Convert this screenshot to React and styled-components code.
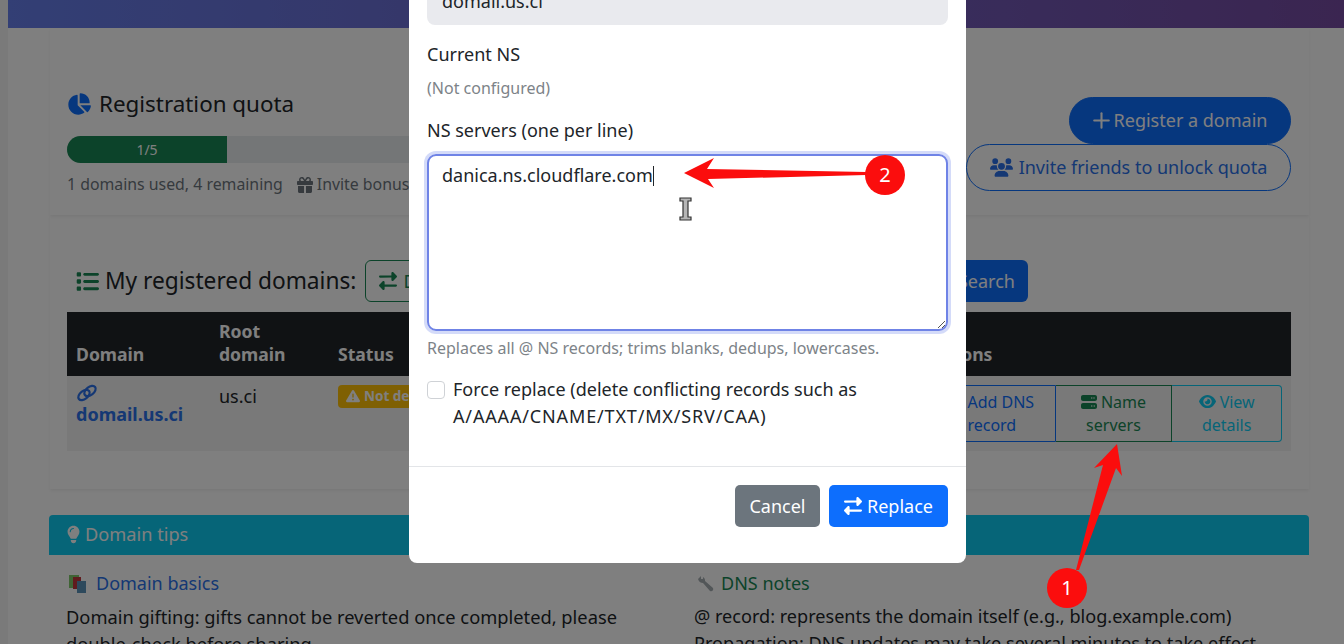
import React from 'react';
import styled, { createGlobalStyle } from 'styled-components';
import { Plus } from 'lucide-react';
import {
  FaChartPie, FaGift, FaUsers, FaList, FaRightLeft,
  FaTriangleExclamation, FaServer, FaEye, FaLightbulb, FaCirclePlus,
} from 'react-icons/fa6';

const GlobalStyle = createGlobalStyle`
  html, body { margin: 0; padding: 0; height: 644px; overflow: hidden; background: #f4f4f4; }
  body { font-family: "Noto Sans", "Open Sans", sans-serif; font-size: 18px; line-height: 27px; color: #212529; }
  * { box-sizing: border-box; }
`;

const Screen = styled.div`
  position: relative;
  height: 644px;
  overflow: hidden;
  padding-left: 8px;
`;

const Page = styled.div`
  background: #fff;
  height: 100%;
`;

const TopBar = styled.div`
  height: 28px;
  background: linear-gradient(90deg, #667eea, #764ba2);
`;

const Main = styled.main`
  padding: 0 35px 0 41px;
`;

const Card = styled.section`
  padding: 0 18px 0 17px;
  margin-left: 1px;
  box-shadow: 0 2px 3px rgba(0, 0, 0, 0.06);
`;

const QuotaCard = styled(Card)`
  height: 187px;
  display: flex;
  justify-content: space-between;
  padding-top: 61px;
`;

const QuotaLeft = styled.div`
  width: 800px;
`;

const CardTitle = styled.h2`
  margin: 0;
  font-size: 22.4px;
  line-height: 30px;
  font-weight: 400;
  display: flex;
  align-items: center;
  gap: 8px;
  svg { color: ${(p) => p.$icon}; flex: none; }
`;

const Progress = styled.div`
  height: 27px;
  margin-top: 17px;
  border-radius: 14px;
  background: #e9ecef;
  overflow: hidden;
`;

const ProgressFill = styled.div`
  height: 100%;
  background: #198754;
  color: #fff;
  font-size: 14px;
  text-align: center;
`;

const QuotaNote = styled.div`
  margin-top: 8px;
  color: #6c757d;
  font-size: 15.85px;
  display: flex;
  align-items: center;
  gap: 14px;
  span { display: inline-flex; align-items: center; gap: 4px; }
`;

const QuotaActions = styled.div`
  width: 325px;
  margin-top: 8px;
  display: flex;
  flex-direction: column;
  align-items: flex-end;
`;

const PillButton = styled.div`
  height: 47px;
  border-radius: 24px;
  display: inline-flex;
  align-items: center;
  justify-content: center;
  gap: ${(p) => p.$gap}px;
  width: ${(p) => p.$width}px;
  padding-right: ${(p) => (p.$outline ? 0 : 4)}px;
  color: ${(p) => (p.$outline ? '#2a70e8' : '#fff')};
  background: ${(p) => (p.$outline ? 'transparent' : '#0d6efd')};
  border: 1px solid #0d6efd;
`;

const DomainsCard = styled(Card)`
  height: 274px;
  padding-top: 45px;
`;

const TitleRow = styled.div`
  height: 42px;
  display: flex;
  align-items: center;
  padding-left: 9px;
`;

const TitleText = styled(CardTitle)`
  font-size: 22.7px;
  gap: 6px;
`;

const GiftButton = styled.div`
  margin-left: 9px;
  width: 150px;
  height: 42px;
  border: 1px solid #198754;
  border-radius: 6px;
  color: #198754;
  display: flex;
  align-items: center;
  padding-left: 13px;
  gap: 6px;
`;

const SearchButton = styled.div`
  margin-left: 429px;
  width: 84px;
  height: 42px;
  border-radius: 6px;
  background: #0d6efd;
  color: #fff;
  display: flex;
  align-items: center;
  justify-content: center;
`;

const Table = styled.table`
  width: 1224px;
  margin-top: 10px;
  border-collapse: collapse;
  table-layout: fixed;
`;

const HeadCell = styled.th`
  background: #212529;
  color: #fff;
  text-align: left;
  vertical-align: bottom;
  font-weight: 700;
  font-size: 17.6px;
  padding: 8px 9px 10px;
  line-height: 23px;
`;

const Cell = styled.td`
  background: #f2f2f2;
  vertical-align: top;
  padding: 7px 9px 9px;
  height: 75px;
`;

const DomainLink = styled.a`
  color: #2a70e8;
  font-weight: 700;
  display: block;
  line-height: 24px;
  margin-top: 1px;
  svg { display: block; }
`;

const Badge = styled.span`
  display: inline-flex;
  align-items: center;
  gap: 4px;
  height: 23px;
  padding: 0 8px;
  background: #ffc107;
  color: #fff;
  border-radius: 4px;
  font-size: 13.5px;
  font-weight: 700;
  white-space: nowrap;
`;

const ButtonGroup = styled.div`
  display: flex;
  margin: 2px 0 0 1px;
`;

const ActionButton = styled.div`
  width: ${(p) => p.$width}px;
  height: 57px;
  border: 1px solid ${(p) => p.$color};
  border-left-width: ${(p) => (p.$first ? 1 : 0)}px;
  color: ${(p) => p.$color};
  border-radius: ${(p) => (p.$first ? '4px 0 0 4px' : p.$last ? '0 4px 4px 0' : '0')};
  font-size: 16px;
  line-height: 23px;
  text-align: center;
  padding: 5px 8px 0;
  svg { vertical-align: -2px; margin-right: 4px; }
`;

const TipsCard = styled.section`
  margin-top: 26px;
  border-radius: 4px 4px 0 0;
`;

const TipsHeader = styled.div`
  height: 40px;
  background: #0dcaf0;
  color: #fff;
  border-radius: 4px 4px 0 0;
  padding: 0 0 2px 18px;
  display: flex;
  align-items: center;
  gap: 5px;
  font-size: 18.2px;
  svg { width: 13px; height: 19px; }
`;

const TipsBody = styled.div`
  display: grid;
  grid-template-columns: 628px 1fr;
  padding: 15px 18px 0 17px;
`;

const TipTitle = styled.div`
  display: flex;
  align-items: center;
  gap: ${(p) => p.$gap}px;
  height: 27px;
  color: ${(p) => p.$color};
  svg { margin-left: 3px; flex: none; }
`;

const TipText = styled.p`
  margin: 6px 0 0;
  font-size: ${(p) => p.$size}px;
  white-space: nowrap;
`;

const Backdrop = styled.div`
  position: absolute;
  inset: 0;
  background: rgba(0, 0, 0, 0.5);
`;

const Modal = styled.div`
  position: absolute;
  left: 409px;
  bottom: 81px;
  width: 557px;
  background: #fff;
  border-radius: 0 0 8px 8px;
`;

const ModalBody = styled.div`
  padding: 0 18px 36px;
`;

const ReadOnlyField = styled.div`
  height: 46px;
  background: #e9eaee;
  border-radius: 8px;
  padding: 9px 15px;
`;

const FieldLabel = styled.div`
  margin-top: ${(p) => p.$top}px;
`;

const Muted = styled.div`
  color: #7d8388;
  font-size: 16px;
  line-height: 24px;
  margin-top: ${(p) => p.$top}px;
`;

const NsInput = styled.div`
  position: relative;
  height: 177px;
  margin-top: 10px;
  border: 2px solid #6f83e6;
  border-radius: 9px;
  box-shadow: 0 0 0 3px rgba(102, 126, 234, 0.28);
  padding: 6px 13px;
`;

const Caret = styled.span`
  display: inline-block;
  width: 1px;
  height: 20px;
  background: #212529;
  vertical-align: -4px;
`;

const ResizeGrip = styled.svg`
  position: absolute;
  right: 0;
  bottom: 0;
`;

const CheckRow = styled.label`
  display: flex;
  gap: 8px;
  margin-top: 16px;
`;

const CheckBox = styled.span`
  flex: none;
  width: 18px;
  height: 18px;
  margin-top: 5px;
  border: 1px solid #cfd2d6;
  border-radius: 4px;
`;

const CodeList = styled.span`
  letter-spacing: 0.85px;
`;

const ModalFooter = styled.div`
  height: 97px;
  border-top: 1px solid #e3e5e8;
  padding: 18px 18px 0;
  display: flex;
  justify-content: flex-end;
  gap: 9px;
`;

const FooterButton = styled.div`
  width: ${(p) => p.$width}px;
  height: 42px;
  border-radius: 5px;
  color: #fff;
  background: ${(p) => p.$bg};
  display: flex;
  align-items: center;
  justify-content: center;
  gap: 5px;
`;

const Annotations = styled.svg`
  position: absolute;
  left: 0;
  top: 0;
  pointer-events: none;
`;

const Marker = styled.div`
  position: absolute;
  left: ${(p) => p.$x}px;
  top: ${(p) => p.$y}px;
  width: 40px;
  height: 40px;
  border-radius: 50%;
  background: #fb0d0d;
  color: #fff;
  font-size: 20px;
  line-height: 40px;
  text-align: center;
`;

function ChainIcon() {
  return (
    <svg width="22" height="18" viewBox="0 0 22 18" fill="none" stroke="currentColor" strokeWidth="2.2">
      <ellipse cx="8" cy="11" rx="6.500" ry="4" transform="rotate(-38 8 11)" />
      <ellipse cx="14" cy="7" rx="6.500" ry="4" transform="rotate(-38 14 7)" />
    </svg>
  );
}

function BooksIcon() {
  return (
    <svg width="18" height="18" viewBox="0 0 18 18">
      <rect x="0" y="0" width="10" height="13" fill="#7fc96b" />
      <rect x="4" y="2" width="8" height="12" fill="#c0373d" />
      <rect x="8" y="6" width="9" height="12" fill="#5b93b8" />
    </svg>
  );
}

function WrenchIcon() {
  return (
    <svg width="18" height="18" viewBox="0 0 18 18">
      <path d="M1 4L4 1L4 4L6 4L6 2C8 3 8 5 8 6L16 13C17 15 15 17 13 16L6 8C4 8 2 7 1 4Z" fill="#a4acb0" />
    </svg>
  );
}

export default function App() {
  return (
    <>
      <GlobalStyle />
      <Screen>
        <Page>
          <TopBar />
          <Main>
            <QuotaCard>
              <QuotaLeft>
                <CardTitle $icon="#0d6efd"><FaChartPie size={24} />Registration quota</CardTitle>
                <Progress><ProgressFill style={{ width: `${(1 / 5) * 100}%` }}>1/5</ProgressFill></Progress>
                <QuotaNote>
                  1 domains used, 4 remaining
                  <span><FaGift size={16} />Invite bonus</span>
                </QuotaNote>
              </QuotaLeft>
              <QuotaActions>
                <PillButton $width={222} $gap={0}><Plus size={25} strokeWidth={2} />Register a domain</PillButton>
                <PillButton $width={325} $gap={6} $outline><FaUsers size={23} />Invite friends to unlock quota</PillButton>
              </QuotaActions>
            </QuotaCard>

            <DomainsCard>
              <TitleRow>
                <TitleText $icon="#198754"><FaList size={23} />My registered domains:</TitleText>
                <GiftButton><FaRightLeft size={18} />Domain</GiftButton>
                <SearchButton>Search</SearchButton>
              </TitleRow>
              <Table>
                <colgroup>
                  <col width="143" />
                  <col width="119" />
                  <col width="589" />
                  <col />
                </colgroup>
                <thead>
                  <tr>
                    <HeadCell>Domain</HeadCell>
                    <HeadCell>Root domain</HeadCell>
                    <HeadCell>Status</HeadCell>
                    <HeadCell>Actions</HeadCell>
                  </tr>
                </thead>
                <tbody>
                  <tr>
                    <Cell>
                      <DomainLink><ChainIcon />domail.us.ci</DomainLink>
                    </Cell>
                    <Cell>us.ci</Cell>
                    <Cell><Badge><FaTriangleExclamation size={14} />Not delegated</Badge></Cell>
                    <Cell>
                      <ButtonGroup>
                        <ActionButton $first $width={128} $color="#0d6efd"><FaCirclePlus size={14} />Add DNS record</ActionButton>
                        <ActionButton $width={117} $color="#198754"><FaServer size={16} />Name servers</ActionButton>
                        <ActionButton $last $width={110} $color="#0dcaf0"><FaEye size={17} />View details</ActionButton>
                      </ButtonGroup>
                    </Cell>
                  </tr>
                </tbody>
              </Table>
            </DomainsCard>

            <TipsCard>
              <TipsHeader><FaLightbulb />Domain tips</TipsHeader>
              <TipsBody>
                <div>
                  <TipTitle $gap={9} $color="#2a70e8"><BooksIcon />Domain basics</TipTitle>
                  <TipText $size={18.3}>Domain gifting: gifts cannot be reverted once completed, please<br />double-check before sharing.</TipText>
                </div>
                <div>
                  <TipTitle $gap={6} $color="#198754"><WrenchIcon />DNS notes</TipTitle>
                  <TipText $size={18.1}>@ record: represents the domain itself (e.g., blog.example.com)<br />Propagation: DNS updates may take several minutes to take effect.</TipText>
                </div>
              </TipsBody>
            </TipsCard>
          </Main>
        </Page>

        <Backdrop />

        <Modal>
          <ModalBody>
            <ReadOnlyField>domail.us.ci</ReadOnlyField>
            <FieldLabel $top={16}>Current NS</FieldLabel>
            <Muted $top={8}>(Not configured)</Muted>
            <FieldLabel $top={17}>NS servers (one per line)</FieldLabel>
            <NsInput>
              danica.ns.cloudflare.com<Caret />
              <ResizeGrip width="10" height="10" viewBox="0 0 10 10">
                <path d="M9 2L2 9M9 6L6 9" stroke="#555" strokeWidth="1" />
              </ResizeGrip>
            </NsInput>
            <Muted $top={5}>Replaces all @ NS records; trims blanks, dedups, lowercases.</Muted>
            <CheckRow>
              <CheckBox />
              <span>Force replace (delete conflicting records such as <CodeList>A/AAAA/CNAME/TXT/MX/SRV/CAA)</CodeList></span>
            </CheckRow>
          </ModalBody>
          <ModalFooter>
            <FooterButton $width={85} $bg="#6c757d">Cancel</FooterButton>
            <FooterButton $width={119} $bg="#0d6efd"><FaRightLeft size={18} />Replace</FooterButton>
          </ModalFooter>
        </Modal>

        <Annotations width="1344" height="644" viewBox="0 0 1344 644">
          {/* arrow 2, pointing left at the typed text */}
          <path d="M684 173L714 158L707 169L866 172L866 175L708 179L714 188Z" fill="#fb0d0d" />
          {/* arrow 1, pointing up at the name servers button */}
          <path d="M1117 444L1122 476L1116 468L1079 570L1076 570L1103 465L1094 468Z" fill="#fb0d0d" />
          {/* I-beam text cursor */}
          <path d="M680 198H691V201H688V217H691V220H680V217H683V201H680Z" fill="#b5b5b5" stroke="#333" strokeWidth="1.2" />
        </Annotations>
        <Marker $x={865} $y={155}>2</Marker>
        <Marker $x={1047} $y={568}>1</Marker>
      </Screen>
    </>
  );
}
